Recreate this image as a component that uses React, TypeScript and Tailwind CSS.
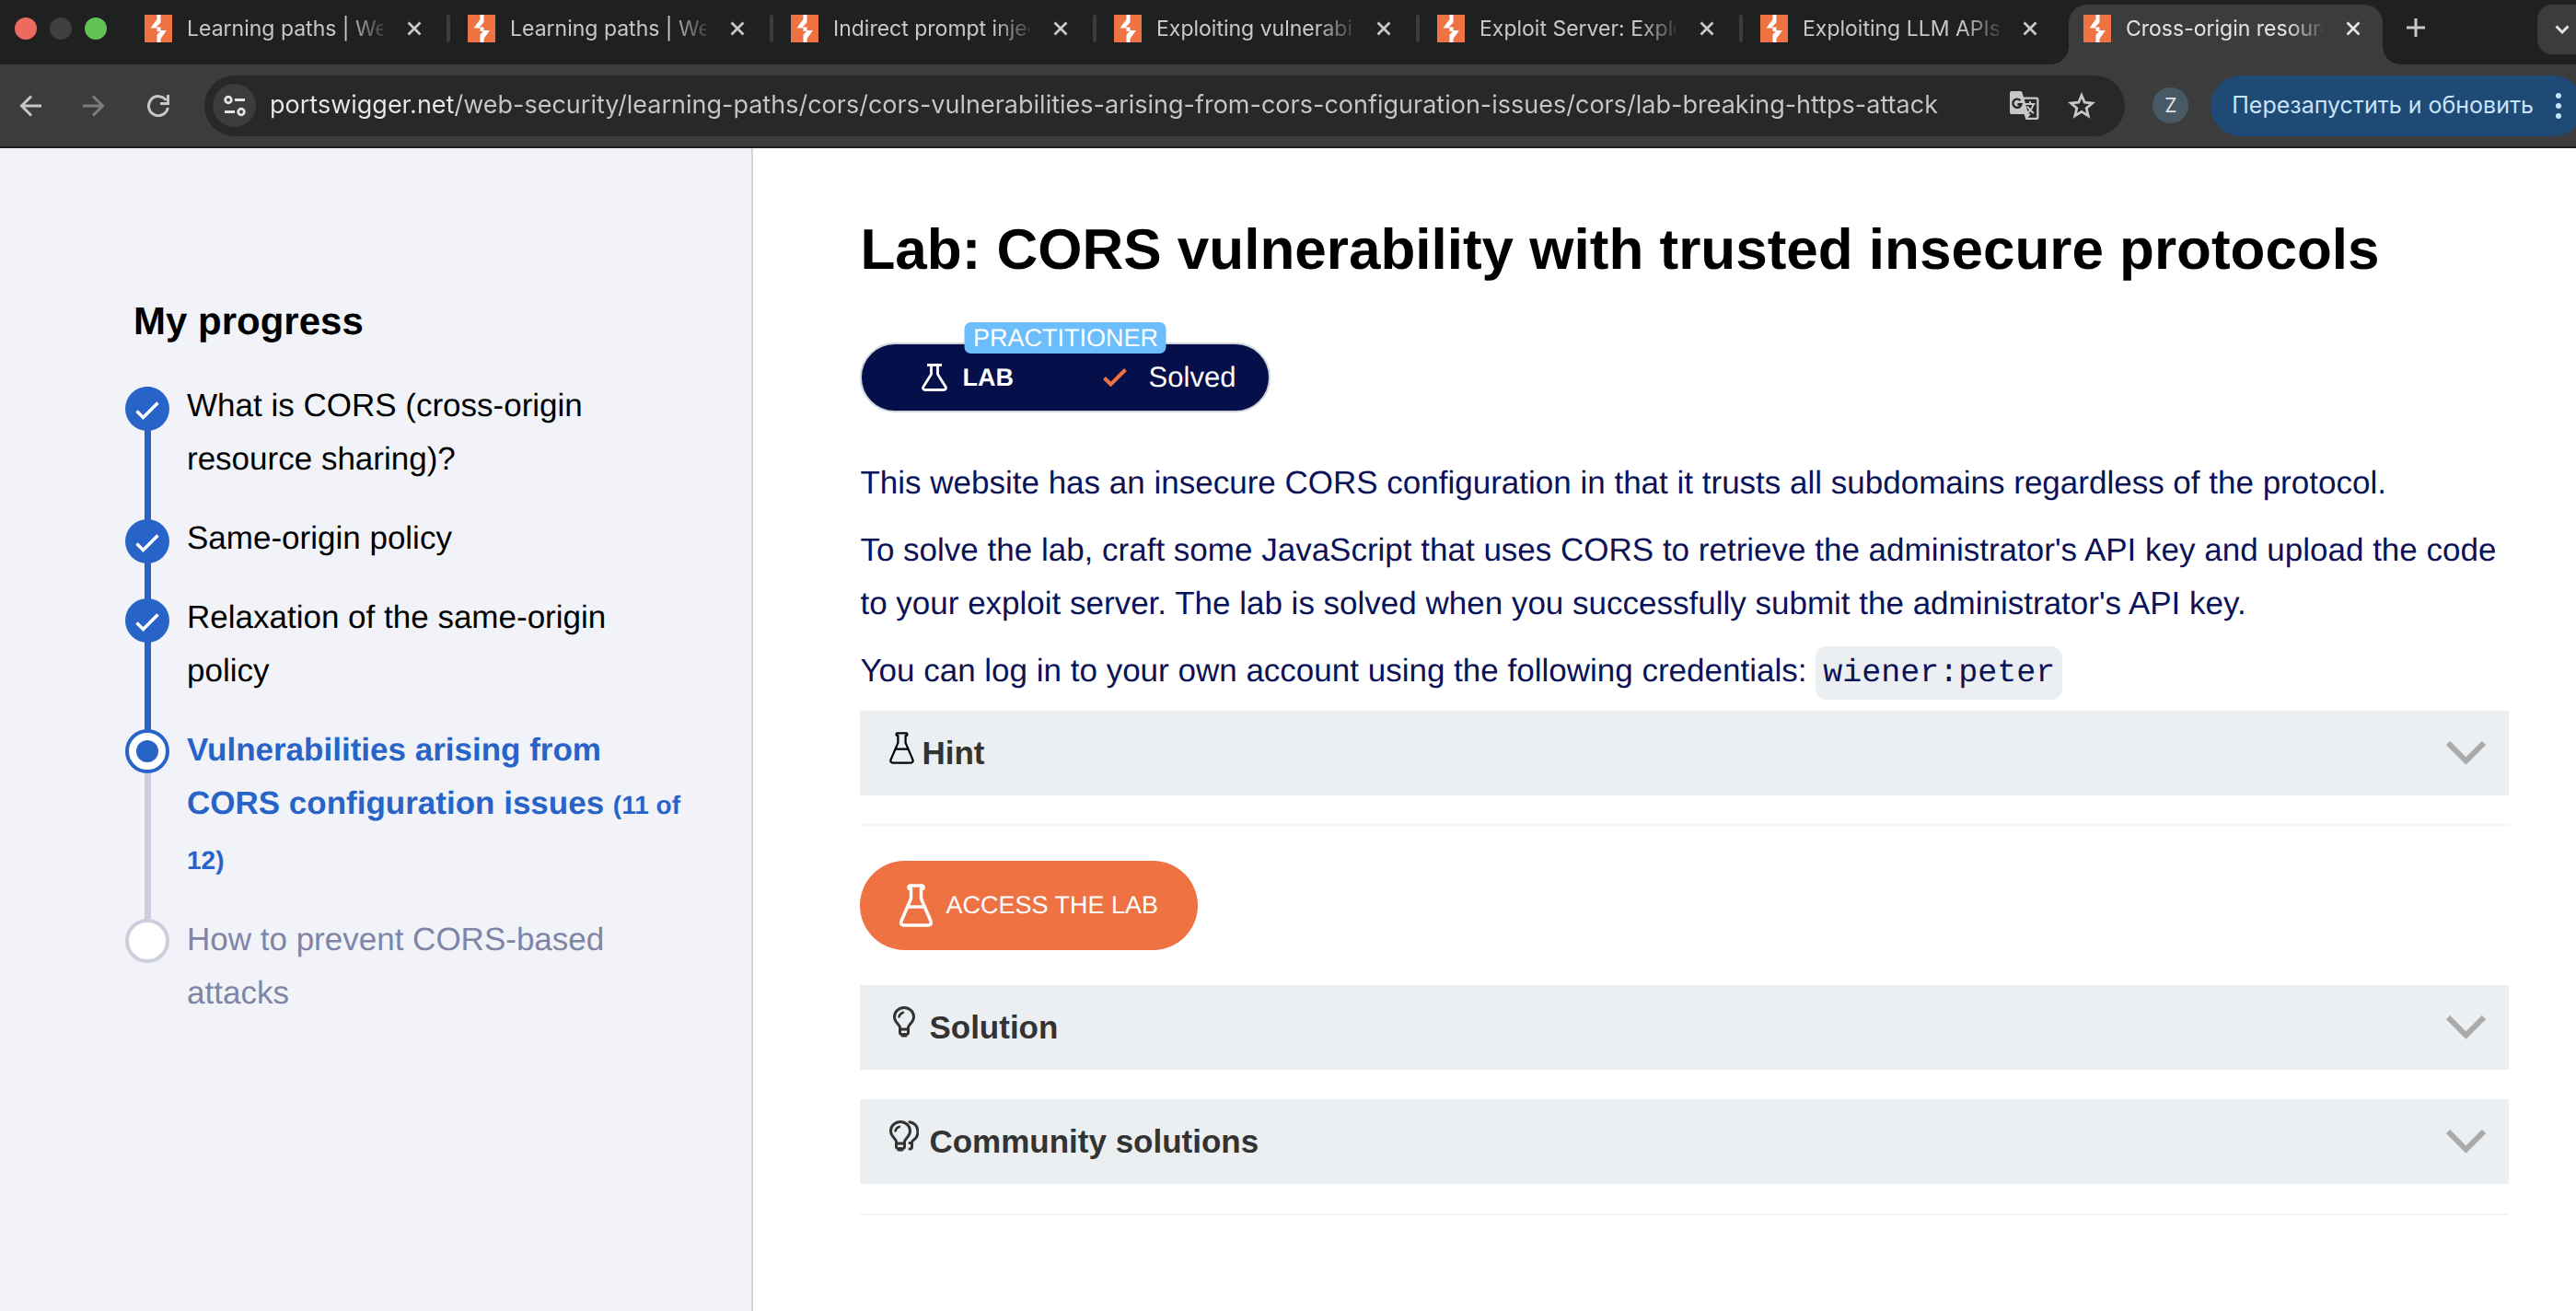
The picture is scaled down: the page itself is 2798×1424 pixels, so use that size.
const tabs = [
  "Learning paths | Web Security",
  "Learning paths | Web Security",
  "Indirect prompt injection",
  "Exploiting vulnerabilities",
  "Exploit Server: Exploiting",
  "Exploiting LLM APIs with",
  "Cross-origin resource sharing",
];

function Favicon() {
  return (
    <svg viewBox="0 0 30 30" className="size-[30px] shrink-0" aria-hidden="true">
      <rect width="30" height="30" fill="#ee7242" />
      <path d="M13.500 0h4v8.500L12.500 13.500h5v3.500h6.500L17.500 26v4h-4v-8.500l3.500-3.500h-3.500v-3.500H6.500L13.500 5z" fill="#fff" />
    </svg>
  );
}

function Close() {
  return (
    <svg viewBox="0 0 16 16" className="size-4" fill="none" stroke="currentColor" strokeWidth="2.800" aria-hidden="true">
      <path d="M1.500 1.500l13 13M14.500 1.500l-13 13" />
    </svg>
  );
}

function Tick({ className, stroke }: { className: string; stroke: number }) {
  return (
    <svg viewBox="0 0 26 20" className={className} fill="none" stroke="currentColor" strokeWidth={stroke} aria-hidden="true">
      <path d="M1.500 10.500l7 7L24.500 1.500" />
    </svg>
  );
}

function Tab({ title, active, divider }: { title: string; active: boolean; divider: boolean }) {
  return (
    <div className="relative flex min-w-0 max-w-[351px] flex-1 self-stretch pt-[5px] pr-[10px]">
      <div
        className={
          active
            ? "relative flex min-w-0 flex-1 items-start rounded-t-[20px] bg-[#3c3c3c] pt-[11px] pr-6 pl-4 text-[#e3e3e3]"
            : "flex min-w-0 flex-1 items-start pt-[11px] pr-6 pl-4 text-[#c7c8c7]"
        }
      >
        {active && (
          <>
            <span className="absolute bottom-0 -left-5 size-5 bg-[radial-gradient(circle_at_0_0,transparent_20px,#3c3c3c_20px)]" />
            <span className="absolute -right-5 bottom-0 size-5 bg-[radial-gradient(circle_at_100%_0,transparent_20px,#3c3c3c_20px)]" />
          </>
        )}
        <button className="flex min-w-0 flex-1 items-center gap-4 text-left">
          <Favicon />
          <span className="flex-1 overflow-hidden text-[23px] leading-[30px] whitespace-nowrap [mask-image:linear-gradient(to_right,black_82%,transparent_104%)]">
            {title}
          </span>
        </button>
        <button className="ml-[26px] flex h-[30px] items-center" aria-label="Close tab">
          <Close />
        </button>
      </div>
      {divider && <span className="absolute top-4 right-[3px] h-[30px] w-1 rounded-full bg-[#3c3c3c]" />}
    </div>
  );
}

function Flask({ className, stroke }: { className: string; stroke: number }) {
  return (
    <svg viewBox="0 0 36 47" className={className} fill="none" stroke="currentColor" strokeWidth={stroke} strokeLinejoin="round" strokeLinecap="round" aria-hidden="true">
      <path d="M11.500 2h13c2 0 2 3.500 0 3.500h-1V16l10.500 24.500c1 3-.5 4.500-3 4.500H5c-2.500 0-4-1.500-3-4.500L12.500 16V5.500h-1c-2 0-2-3.500 0-3.500z" />
      <path d="M9 25h18" />
    </svg>
  );
}

function PlainFlask() {
  return (
    <svg viewBox="0 0 28 30" className="h-[30px] w-7" fill="none" stroke="currentColor" strokeWidth="2.800" strokeLinejoin="round" aria-hidden="true">
      <path d="M6 1.500h16M10.500 2v9.500L2 25c-1 2 0 3.500 2 3.500h20c2 0 3-1.500 2-3.500l-8.500-13.500V2" />
    </svg>
  );
}

function Bulb({ double }: { double?: boolean }) {
  return (
    <svg viewBox="0 0 32 34" className="h-[34px] w-8 shrink-0" fill="none" stroke="currentColor" strokeWidth="3" strokeLinecap="round" aria-hidden="true">
      <g transform={double ? "translate(-4 0)" : undefined}>
        <path d="M11.500 25v-2c0-3-6-5.500-6-11.500a10.500 10 0 0 1 21 0c0 6-6 8.500-6 11.500v2z" strokeLinejoin="round" />
        <path d="M11.500 25v3.500c0 2 1.500 2 2.500 2h4c1 0 2.500 0 2.500-2V25M14 32h4" />
        <path d="M10.500 11.500c.5-2.500 2-4 4.500-4.800" strokeWidth="2.500" />
      </g>
      {double && <path d="M22 1.800c11 2 11 15.200 4 19.700-1.500 1-1.500 2-1.500 3H22M24.500 24.500v4c0 2-1 2.500-2.500 2.500" />}
    </svg>
  );
}

function Accordion({ title, icon, className }: { title: string; icon: React.ReactNode; className: string }) {
  return (
    <button className={className + " flex h-[92px] w-full items-center bg-[#ebeff2] pr-[25px] pl-8 text-left text-[35px] font-bold text-[#333332]"}>
      {icon}
      {title}
      <svg viewBox="0 0 43 26" className="ml-auto h-[26px] w-[43px]" fill="none" stroke="#aaaaaa" strokeWidth="6" aria-hidden="true">
        <path d="M2 2l19.500 19.500L41 2" />
      </svg>
    </button>
  );
}

type State = "done" | "current" | "todo";

const steps: { label: string; note?: string; state: State }[] = [
  { label: "What is CORS (cross-origin resource sharing)?", state: "done" },
  { label: "Same-origin policy", state: "done" },
  { label: "Relaxation of the same-origin policy", state: "done" },
  { label: "Vulnerabilities arising from CORS configuration issues", note: "(11 of 12)", state: "current" },
  { label: "How to prevent CORS-based attacks", state: "todo" },
];

function Marker({ state }: { state: State }) {
  if (state === "done")
    return (
      <span className="relative flex size-12 items-center justify-center rounded-full bg-[#2864c8] pt-1 text-white">
        <Tick className="h-5 w-[26px]" stroke={3.5} />
      </span>
    );
  if (state === "current")
    return (
      <span className="relative flex size-12 items-center justify-center rounded-full border-4 border-[#2864c8] bg-white">
        <span className="size-6 rounded-full bg-[#2864c8]" />
      </span>
    );
  return <span className="relative size-12 rounded-full border-4 border-[#cccddd] bg-white" />;
}

const labelStyle: Record<State, string> = {
  done: "text-black",
  current: "font-bold text-[#2864c8]",
  todo: "text-[#8085a5]",
};

export default function App() {
  return (
    <div className="flex min-h-screen flex-col overflow-hidden bg-white font-['Liberation_Sans',Arial,sans-serif] [text-rendering:geometricPrecision]">
      <header className="font-[Inter,sans-serif]">
        <div className="flex h-[70px] bg-[#1f2120]">
          <div className="flex w-[141px] shrink-0 gap-[14px] pt-[19px] pl-4">
            <span className="size-6 rounded-full bg-[#ed6a5f]" />
            <span className="size-6 rounded-full bg-[#3e403f]" />
            <span className="size-6 rounded-full bg-[#61c454]" />
          </div>
          {tabs.map((title, i) => (
            <Tab key={i} title={title} active={i === 6} divider={i < 5} />
          ))}
          <button className="ml-4 flex h-[60px] items-center text-[#c7c8c7]" aria-label="New tab">
            <svg viewBox="0 0 20 20" className="size-5" stroke="currentColor" strokeWidth="3" aria-hidden="true">
              <path d="M10 0v20M0 10h20" />
            </svg>
          </button>
          <button className="mt-[5px] -mr-4 ml-auto flex h-[54px] w-[58px] shrink-0 items-center rounded-2xl bg-[#3c3c3c] pl-[19px] text-[#e3e3e3]" aria-label="Search tabs">
            <svg viewBox="0 0 16 10" className="h-[10px] w-4" fill="none" stroke="currentColor" strokeWidth="3" aria-hidden="true">
              <path d="M1.500 1.500L8 8l6.500-6.500" />
            </svg>
          </button>
        </div>
        <div className="flex h-[91px] items-center border-b-2 border-[#1f2020] bg-[#3c3c3c] pl-[21px]">
          <button aria-label="Back" className="text-[#c7c7c7]">
            <svg viewBox="0 0 24 24" className="size-6" fill="none" stroke="currentColor" strokeWidth="3" aria-hidden="true">
              <path d="M24 12H2.500M13 1.500L2.500 12L13 22.500" />
            </svg>
          </button>
          <button aria-label="Forward" className="ml-[45px] text-[#7d7d7d]">
            <svg viewBox="0 0 24 24" className="size-6" fill="none" stroke="currentColor" strokeWidth="3" aria-hidden="true">
              <path d="M0 12h21.500M11 1.500L21.500 12L11 22.500" />
            </svg>
          </button>
          <button aria-label="Reload" className="ml-[46px] text-[#c7c7c7]">
            <svg viewBox="0 0 24 24" className="size-6" fill="none" stroke="currentColor" strokeWidth="3" aria-hidden="true">
              <path d="M20.500 6A10.500 10.500 0 1 0 22.300 14M22.500 0v9.500H14" />
            </svg>
          </button>
          <div className="ml-[38px] flex h-[66px] min-w-0 flex-1 items-center rounded-full bg-[#282828] pr-8 pl-[9px]">
            <button aria-label="View site information" className="flex size-[47px] shrink-0 items-center justify-center rounded-full bg-[#3c3c3c] text-[#e3e3e3]">
              <svg viewBox="0 0 24 24" className="size-6" fill="none" stroke="currentColor" strokeWidth="2.800" aria-hidden="true">
                <circle cx="5" cy="5.500" r="3.300" />
                <path d="M12 5.500h11M1 18.500h11" />
                <circle cx="19" cy="18.500" r="3.300" />
              </svg>
            </button>
            <input
              aria-label="Address"
              className="ml-[15px] min-w-0 flex-1 bg-[linear-gradient(to_right,#e8e8e8_203px,#c7c7c7_203px)] bg-clip-text text-[27px] text-transparent outline-none"
              defaultValue="portswigger.net/web-security/learning-paths/cors/cors-vulnerabilities-arising-from-cors-configuration-issues/cors/lab-breaking-https-attack"
            />
            <button aria-label="Translate this page" className="text-[#c7c7c7]">
              <svg viewBox="0 0 32 32" className="size-8" aria-hidden="true">
                <path d="M2 0h9.500a2 2 0 0 1 2 1.500L15 6.500h14a2.500 2.500 0 0 1 2.500 2.500v19.500A2.500 2.500 0 0 1 29 31H17.500l-2-6H2a2 2 0 0 1-2-2V2a2 2 0 0 1 2-2z" fill="currentColor" />
                <path d="M15.700 8.800h13.500v20H19.500l3.500-4-3-.5z" fill="#282828" />
                <path d="M11.500 10.200a4.600 4.600 0 1 0 1 4H8.500" fill="none" stroke="#282828" strokeWidth="2.400" />
                <path d="M17 14h10.500M22 11v3M25.500 14c-1 5-4 8-6.500 9.500M19 16.500c2 3 4 5.500 7 7.500" fill="none" stroke="currentColor" strokeWidth="2" />
              </svg>
            </button>
            <button aria-label="Bookmark this tab" className="ml-[31px] text-[#c7c7c7]">
              <svg viewBox="0 0 30 30" className="size-[30px]" fill="none" stroke="currentColor" strokeWidth="2.800" aria-hidden="true">
                <path d="M15 3.500l3.200 7.700 8.500.8-6.500 5.500 2 8.300L15 21.400l-7.200 4.400 2-8.300L3.300 12l8.500-.8z" />
              </svg>
            </button>
          </div>
          <button aria-label="Profile" className="ml-[30px] size-[39px] shrink-0 rounded-full bg-[#475a66] text-[21px] text-[#e3e3e3]">
            Z
          </button>
          <button className="-mr-2 ml-6 flex h-[66px] shrink-0 items-center rounded-full bg-[#1f4a76] pr-6 pl-[23px] text-[25px] text-[#c9e5fd]">
            Перезапустить и обновить
            <svg viewBox="0 0 6 28" className="ml-6 h-7 w-[6px]" fill="currentColor" aria-hidden="true">
              <circle cx="3" cy="3" r="3" />
              <circle cx="3" cy="14" r="3" />
              <circle cx="3" cy="25" r="3" />
            </svg>
          </button>
        </div>
      </header>

      <div className="flex flex-1">
        <aside className="w-[29.25%] shrink-0 border-r-2 border-[#d3d5d8] bg-[#f1f3f8] pt-[159px] pr-[72px] pl-[136px]">
          <h2 className="pl-[9px] text-[42px] leading-[58px] font-bold text-black">My progress</h2>
          <ol className="mt-[34px] text-[35px] leading-[58px]">
            {steps.map((step, i) => (
              <li key={step.label} className={i < steps.length - 1 ? "relative flex gap-[19px] pb-7" : "relative flex gap-[19px]"}>
                {i < steps.length - 1 && (
                  <span
                    className={
                      i < 3
                        ? "absolute top-2 -bottom-3 left-[21px] w-[7px] bg-[#2864c8]"
                        : "absolute top-2 -bottom-3 left-[21px] w-[7px] bg-[#cccddd]"
                    }
                  />
                )}
                <span className={step.state === "done" ? "flex shrink-0 pt-2" : "flex shrink-0 pt-[6px]"}>
                  <Marker state={step.state} />
                </span>
                <a href="#step" className={labelStyle[step.state]}>
                  {step.label} {step.note && <span className="text-[28px]">{step.note}</span>}
                </a>
              </li>
            ))}
          </ol>
        </aside>

        <main className="min-w-0 flex-1 pt-[74px] pr-[73px] pl-[116px]">
          <h1 className="text-[62px] leading-[74px] font-bold text-black">
            Lab: CORS vulnerability with trusted insecure protocols
          </h1>

          <div className="relative mt-[63px] flex h-[76px] w-[446px] items-center rounded-full border-2 border-[#d0d3d8] bg-[#05104b] pr-9 pl-[65px] text-white">
            <span className="absolute -top-6 left-1/2 -translate-x-1/2 rounded-[7px] bg-[#6cbdfb] px-[9px] text-[27px] leading-[34px]">
              PRACTITIONER
            </span>
            <PlainFlask />
            <span className="ml-4 text-[27px] font-bold">LAB</span>
            <Tick className="ml-auto h-5 w-[26px] text-[#ee7242]" stroke={4} />
            <span className="ml-6 text-[31px]">Solved</span>
          </div>

          <div className="mt-12 flex flex-col gap-[15px] text-[35px] leading-[58px] text-[#0b1358]">
            <p>This website has an insecure CORS configuration in that it trusts all subdomains regardless of the protocol.</p>
            <p>
              To solve the lab, craft some JavaScript that uses CORS to retrieve the administrator's API key and upload the
              code to your exploit server. The lab is solved when you successfully submit the administrator's API key.
            </p>
            <p className="h-[58px]">
              You can log in to your own account using the following credentials:{" "}
              <code className="inline-block rounded-xl bg-[#ebeff2] px-2 font-['Liberation_Mono',monospace] leading-[58px]">
                wiener:peter
              </code>
            </p>
          </div>

          <Accordion title="Hint" className="mt-[14px]" icon={<Flask className="mr-2 mb-3 h-[35px] w-[27px] text-black" stroke={3} />} />
          <hr className="mt-[31px] border-t-2 border-[#f4f4f4]" />
          <a
            href="#lab"
            className="mt-[38px] inline-flex h-[97px] items-center rounded-full bg-[#ee7242] pr-[43px] pl-[43px] text-[27px] text-white"
          >
            <Flask className="mr-[14px] h-[47px] w-9" stroke={3.5} />
            ACCESS THE LAB
          </a>
          <Accordion title="Solution" className="mt-[38px]" icon={<span className="mr-[11px] mb-3"><Bulb /></span>} />
          <Accordion title="Community solutions" className="mt-8" icon={<span className="mr-[11px] mb-3"><Bulb double /></span>} />
          <hr className="mt-8 border-t-2 border-[#f4f4f4]" />
        </main>
      </div>
    </div>
  );
}
